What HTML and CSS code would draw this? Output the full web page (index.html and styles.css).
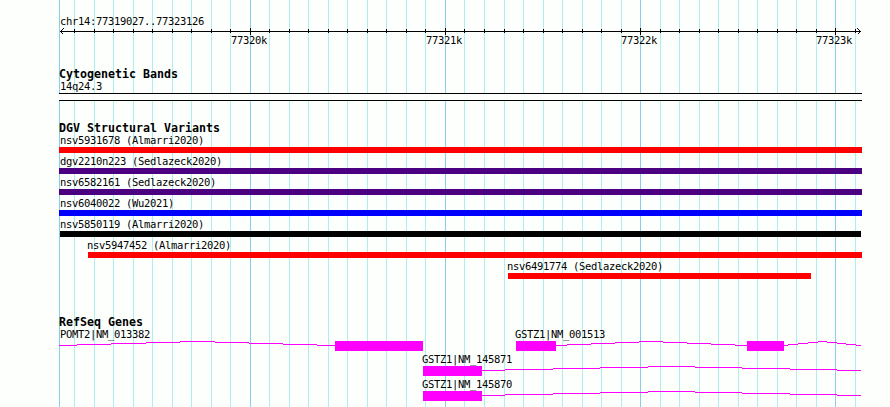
FILE: index.html
```html
<!DOCTYPE html>
<html lang="en">
<head>
<meta charset="utf-8">
<title>chr14:77319027..77323126</title>
<link rel="stylesheet" href="styles.css">
</head>
<body>
<main class="browser">
  <svg class="grid" width="890" height="407" aria-hidden="true">
    <path class="minor" d="M74.5 0V407M94.5 0V407M113.5 0V407M133.5 0V407M152.5 0V407M172.5 0V407M191.5 0V407M211.5 0V407M230.5 0V407M269.5 0V407M289.5 0V407M308.5 0V407M328.5 0V407M347.5 0V407M367.5 0V407M386.5 0V407M406.5 0V407M425.5 0V407M464.5 0V407M484.5 0V407M504.5 0V407M523.5 0V407M543.5 0V407M562.5 0V407M582.5 0V407M601.5 0V407M621.5 0V407M660.5 0V407M679.5 0V407M699.5 0V407M718.5 0V407M738.5 0V407M757.5 0V407M777.5 0V407M796.5 0V407M816.5 0V407M855.5 0V407"/>
    <path class="major" d="M59.5 0V407M250.5 0V407M445.5 0V407M640.5 0V407M835.5 0V407"/>
  </svg>

  <section class="ruler">
    <div class="label">chr14:77319027..77323126</div>
    <svg class="scale" width="803" height="7" viewBox="59 28 803 7">
      <path d="M60 31.5H861M74.5 29V33M94.5 29V33M113.5 29V33M133.5 29V33M152.5 29V33M172.5 29V33M191.5 29V33M211.5 29V33M230.5 29V33M269.5 29V33M289.5 29V33M308.5 29V33M328.5 29V33M347.5 29V33M367.5 29V33M386.5 29V33M406.5 29V33M425.5 29V33M464.5 29V33M484.5 29V33M504.5 29V33M523.5 29V33M543.5 29V33M562.5 29V33M582.5 29V33M601.5 29V33M621.5 29V33M660.5 29V33M679.5 29V33M699.5 29V33M718.5 29V33M738.5 29V33M757.5 29V33M777.5 29V33M796.5 29V33M816.5 29V33M855.5 29V33M250.5 28V35M445.5 28V35M640.5 28V35M835.5 28V35"/>
      <path d="M63.5 28.5L60.5 31.5L63.5 34.5M857.5 28.5L860.5 31.5L857.5 34.5"/>
    </svg>
    <div class="ticks"><span>77320k</span><span>77321k</span><span>77322k</span><span>77323k</span></div>
  </section>

  <section class="bands">
    <h2>Cytogenetic Bands</h2>
    <div class="label">14q24.3</div>
    <div class="band"></div>
  </section>

  <section class="variants">
    <h2>DGV Structural Variants</h2>
    <div class="row"><div class="label">nsv5931678 (Almarri2020)</div><div class="bar red"></div></div>
    <div class="row"><div class="label">dgv2210n223 (Sedlazeck2020)</div><div class="bar indigo"></div></div>
    <div class="row"><div class="label">nsv6582161 (Sedlazeck2020)</div><div class="bar indigo"></div></div>
    <div class="row"><div class="label">nsv6040022 (Wu2021)</div><div class="bar blue"></div></div>
    <div class="row"><div class="label">nsv5850119 (Almarri2020)</div><div class="bar black"></div></div>
    <div class="row from-88"><div class="label">nsv5947452 (Almarri2020)</div><div class="bar red"></div></div>
    <div class="row from-508"><div class="label">nsv6491774 (Sedlazeck2020)</div><div class="bar red"></div></div>
  </section>

  <section class="genes">
    <h2>RefSeq Genes</h2>
    <div class="gene">
      <div class="names"><span class="label">POMT2|NM_013382</span><span class="label second">GSTZ1|NM_001513</span></div>
      <svg width="803" height="10" viewBox="59 341 803 10">
        <path class="intron" d="M59 345.5H77M77 344.5H111M111 343.5H146M146 342.5H180M180 341.5H215M215 342.5H249M249 343.5H283M283 344.5H317M317 345.5H335M556 345.5H567M567 344.5H591M591 343.5H615M615 342.5H639M639 341.5H663M663 342.5H687M687 343.5H711M711 344.5H735M735 345.5H747M784 345.5H788M788 344.5H798M798 343.5H808M808 342.5H818M818 341.5H827M827 342.5H837M837 343.5H846M846 344.5H856M856 345.5H861"/>
        <path class="exon" d="M335 341H423V351H335ZM516 341H556V351H516ZM747 341H784V351H747Z"/>
      </svg>
    </div>
    <div class="gene">
      <div class="names from-423"><span class="label">GSTZ1|NM_145871</span></div>
      <svg width="803" height="10" viewBox="59 366 803 10">
        <path class="intron" d="M482 370.5H505M505 369.5H553M553 368.5H600M600 367.5H648M648 366.5H695M695 367.5H742M742 368.5H790M790 369.5H837M837 370.5H861"/>
        <path class="exon" d="M423 366H482V376H423Z"/>
      </svg>
    </div>
    <div class="gene">
      <div class="names from-423"><span class="label">GSTZ1|NM_145870</span></div>
      <svg width="803" height="10" viewBox="59 366 803 10">
        <path class="intron" d="M482 370.5H505M505 369.5H553M553 368.5H600M600 367.5H648M648 366.5H695M695 367.5H742M742 368.5H790M790 369.5H837M837 370.5H861"/>
        <path class="exon" d="M423 366H482V376H423Z"/>
      </svg>
    </div>
  </section>
</main>
</body>
</html>
```
FILE: styles.css
```css
* { box-sizing: border-box; }

body {
  margin: 0;
  background: #fdfffc;
  color: #000;
  font-family: "DejaVu Sans Mono", monospace;
}

.browser {
  position: relative;
  isolation: isolate;
  width: 890px;
  height: 407px;
  padding: 15px 28px 0 59px;
  overflow: hidden;
}

svg { display: block; shape-rendering: crispEdges; fill: none; }

/* genomic coordinate grid behind every track */
.grid { position: absolute; inset: 0; z-index: -1; }
.minor { stroke: #afeeee; }
.major { stroke: #87ceeb; }

h2 {
  margin: 0;
  height: 14px;
  font-size: 11.63px;
  line-height: 14px;
  font-weight: bold;
  white-space: pre;
}

.label, .ticks {
  font-size: 10.5px;
  line-height: 13px;
  letter-spacing: -0.32px;
  white-space: pre;
}

.label { height: 13px; padding-left: 1px; }

.ruler { height: 52px; }
.scale { stroke: #000; }

.ticks {
  display: flex;
  gap: 159px;
  margin-top: -1px;
  padding-left: 172px;
}

.ticks span { width: 36px; }

.bands h2 { height: 13px; }

.band {
  height: 8px;
  border: solid #000;
  border-width: 1px 0;
  background: #fdfffc;
}

.variants { margin-top: 20px; }
.variants h2 { height: 13px; }

.row { height: 21px; }
.row .label { margin-bottom: 0; }
.bar { height: 6px; }

.red { background: #f00; }
.indigo { background: #4b0082; }
.blue { background: #00f; }
.black { background: #000; margin: 0 1px; }

.from-88 { margin-left: 29px; }
.from-508 { margin-left: 449px; width: 303px; }
.from-88 .label, .from-508 .label { padding-left: 0; text-indent: -1px; }

.genes { margin-top: 34px; }
.genes h2 { height: 13px; }

.gene { height: 25px; }
.names { display: flex; height: 13px; }
.names .second { margin-left: 364px; }
.names.from-423 { margin-left: 362px; }

.intron { stroke: #f0f; }
.exon { fill: #f0f; }
```
